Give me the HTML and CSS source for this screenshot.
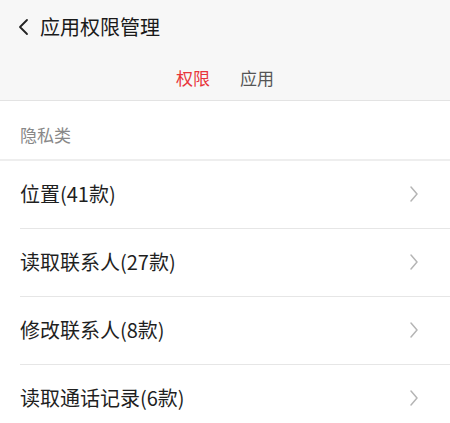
FILE: index.html
```html
<!DOCTYPE html>
<html lang="zh-CN">
<head>
<meta charset="utf-8">
<link rel="stylesheet" href="styles.css">
</head>
<body>
<div class="page">
  <header class="header">
    <div class="titlebar">
      <svg class="back" width="12" height="18" viewBox="0 0 12 18"><path d="M9 2 L2 9 L9 16" fill="none" stroke="#222" stroke-width="1.8" stroke-linecap="round" stroke-linejoin="round"/></svg>
      <span class="title">应用权限管理</span>
    </div>
    <nav class="tabs">
      <span class="tab active">权限</span>
      <span class="tab">应用</span>
    </nav>
  </header>
  <div class="section">隐私类</div>
  <ul class="list">
    <li class="item"><span>位置(41款)</span><svg class="chev" width="10" height="18" viewBox="0 0 10 18"><path d="M2 2 L8 9 L2 16" fill="none" stroke="#b5b5b5" stroke-width="1.5" stroke-linecap="round" stroke-linejoin="round"/></svg></li>
    <li class="item"><span>读取联系人(27款)</span><svg class="chev" width="10" height="18" viewBox="0 0 10 18"><path d="M2 2 L8 9 L2 16" fill="none" stroke="#b5b5b5" stroke-width="1.5" stroke-linecap="round" stroke-linejoin="round"/></svg></li>
    <li class="item"><span>修改联系人(8款)</span><svg class="chev" width="10" height="18" viewBox="0 0 10 18"><path d="M2 2 L8 9 L2 16" fill="none" stroke="#b5b5b5" stroke-width="1.5" stroke-linecap="round" stroke-linejoin="round"/></svg></li>
    <li class="item"><span>读取通话记录(6款)</span><svg class="chev" width="10" height="18" viewBox="0 0 10 18"><path d="M2 2 L8 9 L2 16" fill="none" stroke="#b5b5b5" stroke-width="1.5" stroke-linecap="round" stroke-linejoin="round"/></svg></li>
  </ul>
</div>
</body>
</html>
```
FILE: styles.css
```css
* { box-sizing: border-box; }
html, body { margin: 0; padding: 0; background: #fff; }
body { font-family: "Noto Sans CJK SC", "Noto Sans", sans-serif; color: #222; width: 450px; height: 423px; overflow: hidden; }
.header { background: #f7f7f7; border-bottom: 1px solid #e3e3e3; height: 101px; }
.titlebar { height: 54px; display: flex; align-items: center; padding-left: 18px; }
.back { margin-right: 10px; }
.title { font-size: 20px; color: #1a1a1a; line-height: 1; }
.tabs { height: 46px; display: flex; justify-content: center; align-items: center; gap: 30px; }
.tab { font-size: 17px; color: #555; line-height: 1; }
.tab.active { color: #e8353b; }
.section { height: 60px; display: flex; align-items: center; padding-left: 20px; padding-top: 8px; font-size: 17px; color: #888; border-bottom: 2px solid #eeeeee; }
.list { list-style: none; margin: 0; padding: 0; }
.item { height: 68px; display: flex; align-items: center; justify-content: space-between; margin-left: 20px; padding-right: 31px; border-bottom: 1px solid #e6e6e6; font-size: 20px; color: #1f1f1f; padding-bottom: 2px; }
.chev { display: block; }
```
